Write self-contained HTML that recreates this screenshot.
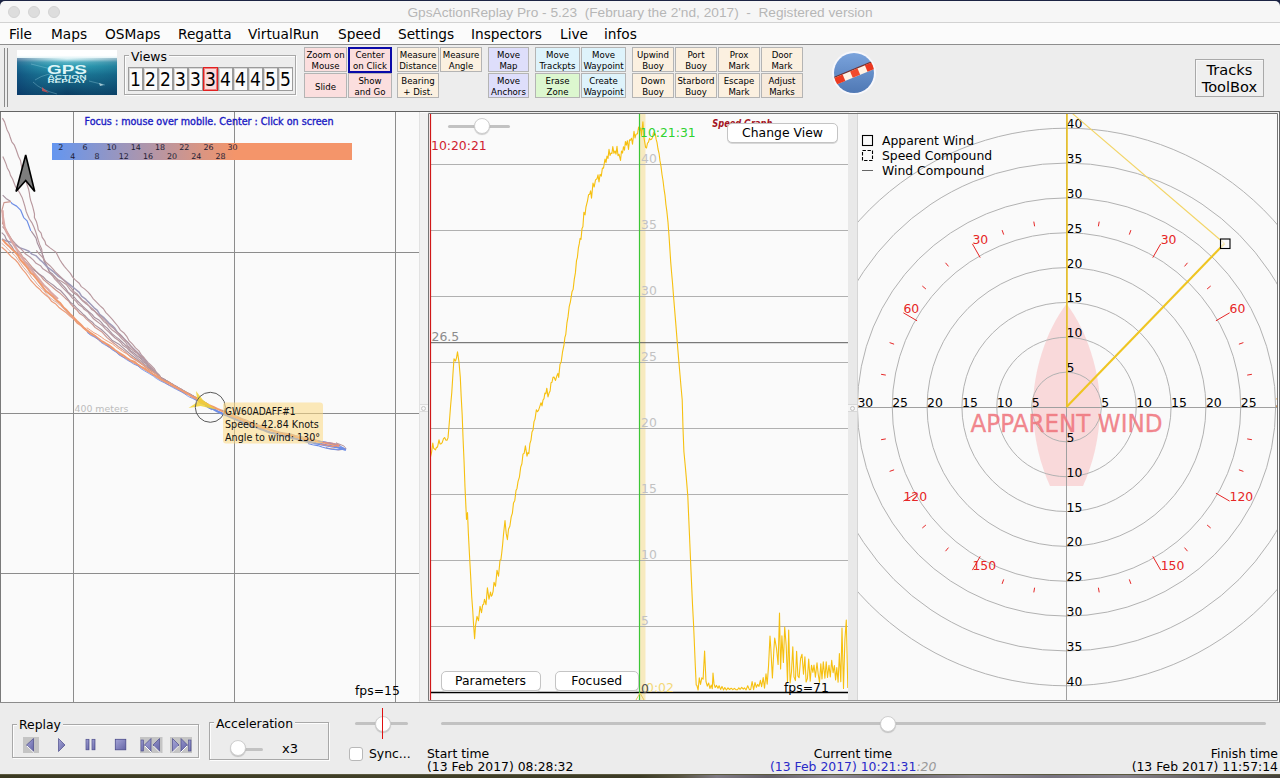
<!DOCTYPE html>
<html lang="en"><head><meta charset="utf-8"><title>GpsActionReplay Pro</title>
<style>
*{box-sizing:border-box}
html,body{margin:0;padding:0}
body{width:1280px;height:778px;overflow:hidden;background:#ececec;position:relative;font-family:"DejaVu Sans","Liberation Sans",sans-serif;color:#000}
.abs{position:absolute}
.t{position:absolute;white-space:nowrap;line-height:1}
#tbk{left:0;top:0;width:1280px;height:7px;background:#1c2444}
#title{left:0;top:1px;width:1280px;height:22px;background:#f6f6f6;border-bottom:1px solid #d2d2d2;border-radius:5px 5px 0 0}
#title .tx{position:absolute;left:0;width:1280px;text-align:center;top:3.5px;font:13.7px "Liberation Sans",sans-serif;color:#b6b6b6;white-space:pre}
.tl{position:absolute;top:5px;width:12px;height:12px;border-radius:6px;background:#dddddd;border:1px solid #d3d3d3}
#menu{left:0;top:23px;width:1280px;height:22px;background:#fbfbfb;border-bottom:1px solid #8e8e8e}
#menu span{position:absolute;top:3px;font-size:13.7px;line-height:16px;white-space:nowrap}
#tool{left:0;top:45px;width:1280px;height:66px;background:#ededed}
.tb{position:absolute;height:25px;border:1px solid #b4b4b4;font-size:8.6px;line-height:11px;text-align:center;padding-top:2px;white-space:nowrap;overflow:hidden}
.tb.one{padding-top:8px}
.gb{position:absolute;border:1px solid #a8a8a8;box-shadow:inset 1px 1px 0 #fdfdfd, 1px 1px 0 #fdfdfd}
.gbl{position:absolute;background:#ededed;padding:0 2px;font-size:12.4px;line-height:14px;white-space:nowrap}
.vb{position:absolute;top:67px;width:15px;height:24px;border:1px solid #9c9c9c;background:#fbfbfb;box-shadow:inset 1px 1px 0 #d8d8d8;font-family:'DejaVu Sans Condensed','DejaVu Sans','Liberation Sans',sans-serif;font-size:19px;line-height:22px;text-align:center;padding-right:0}
.panel{position:absolute;background:#fafafa;overflow:hidden}
.btn{position:absolute;background:#fff;border:1px solid #c4c4c4;border-radius:4px;font-size:12.4px;text-align:center;white-space:nowrap;box-shadow:0 1px 0 #d8d8d8}
.knob{position:absolute;width:16px;height:16px;margin:.5px;border-radius:8px;background:#fff;border:1px solid #cfcfcf;box-shadow:0 1px 1px rgba(0,0,0,.18)}
.trk{position:absolute;height:3px;background:#c2c2c2;border-radius:1.5px}
</style></head>
<body>
<div id="tbk" class="abs"></div><div id="title" class="abs"><div class="tl" style="left:8px"></div><div class="tl" style="left:28px"></div><div class="tl" style="left:48px"></div><div class="tx">GpsActionReplay Pro - 5.23  (February the 2'nd, 2017)  -  Registered version</div></div>
<div id="menu" class="abs"><span style="left:9px">File</span><span style="left:51px">Maps</span><span style="left:105px">OSMaps</span><span style="left:178px">Regatta</span><span style="left:248px">VirtualRun</span><span style="left:338px">Speed</span><span style="left:398px">Settings</span><span style="left:471px">Inspectors</span><span style="left:560px">Live</span><span style="left:604px">infos</span></div>
<div id="tool" class="abs"></div>
<div class="abs" style="left:4px;top:48px;width:1px;height:59px;background:#8a8a8a"></div><div class="abs" style="left:7px;top:48px;width:1px;height:59px;background:#8a8a8a"></div>
<svg class="abs" style="left:17px;top:50px" width="100" height="45" viewBox="0 0 100 45">
<defs><linearGradient id="lg1" x1="0" y1="0" x2="0" y2="1"><stop offset="0" stop-color="#ffffff"/><stop offset="0.12" stop-color="#ffffff"/><stop offset="0.2" stop-color="#d8f0f4"/><stop offset="0.27" stop-color="#5ab4c6"/><stop offset="0.36" stop-color="#2f9db4"/><stop offset="0.55" stop-color="#1a7292"/><stop offset="1" stop-color="#0b3c62"/></linearGradient>
<linearGradient id="lg2" x1="0" y1="0" x2="1" y2="0"><stop offset="0" stop-color="#0a3a70" stop-opacity=".55"/><stop offset="0.5" stop-color="#1c8aa0" stop-opacity="0"/><stop offset="1" stop-color="#0a4a70" stop-opacity=".35"/></linearGradient></defs>
<rect width="100" height="45" fill="url(#lg1)"/><rect y="8" width="100" height="37" fill="url(#lg2)"/>
<path d="M14 14 L34 19 M72 31 L88 35 M18 30 Q30 22 44 24 M16 32 Q24 40 40 44" stroke="#9fd8e4" stroke-width="1" fill="none" opacity=".35"/><path d="M82 33 l5 2 l-4 1z" fill="#d8f0f4" opacity=".7"/>
<path d="M25 37 l7 6 l-7 -2z" fill="#e05050" opacity=".75"/>
<text x="50" y="24.4" text-anchor="middle" font-family="'Liberation Sans',sans-serif" font-weight="bold" font-size="13.4" fill="#dff6f8" textLength="40" lengthAdjust="spacingAndGlyphs">GPS</text>
<text x="50" y="28.7" text-anchor="middle" font-family="'Liberation Sans',sans-serif" font-weight="bold" font-size="4.7" fill="#c6ecf0" textLength="39" lengthAdjust="spacingAndGlyphs">ACTION</text>
<text x="50" y="32.8" text-anchor="middle" font-family="'Liberation Sans',sans-serif" font-weight="bold" font-size="4.7" fill="#d4f2f4" textLength="39" lengthAdjust="spacingAndGlyphs">REPLAY</text>
</svg>
<div class="gb" style="left:124px;top:55px;width:172px;height:40px"></div><div class="gbl" style="left:129px;top:49.5px">Views</div>
<div class="vb" style="left:128px">1</div><div class="vb" style="left:143px">2</div><div class="vb" style="left:158px">2</div><div class="vb" style="left:173px">3</div><div class="vb" style="left:188px">3</div><div class="vb" style="left:203px;border-color:#e02020;background:#fbdcdc;box-shadow:inset 0 0 0 1px #f08080">3</div><div class="vb" style="left:218px">4</div><div class="vb" style="left:233px">4</div><div class="vb" style="left:248px">4</div><div class="vb" style="left:263px">5</div><div class="vb" style="left:278px">5</div>
<div class="tb" style="left:304px;top:47px;width:43px;background:#fbdede">Zoom on<br>Mouse</div><div class="tb" style="left:348px;top:47px;width:44px;background:#fbdede;border:2px solid #0a0aa8;padding-top:1px;height:26px">Center<br>on Click</div><div class="tb one" style="left:304px;top:73px;width:43px;background:#fbdede">Slide</div><div class="tb" style="left:348px;top:73px;width:44px;background:#fbdede">Show<br>and Go</div><div class="tb" style="left:397px;top:47px;width:42px;background:#fbf0e0">Measure<br>Distance</div><div class="tb" style="left:440px;top:47px;width:42px;background:#fbf0e0">Measure<br>Angle</div><div class="tb" style="left:397px;top:73px;width:42px;background:#fbf0e0">Bearing<br>+ Dist.</div><div class="tb" style="left:488px;top:47px;width:41px;background:#dedefb">Move<br>Map</div><div class="tb" style="left:488px;top:73px;width:41px;background:#dedefb">Move<br>Anchors</div><div class="tb" style="left:535px;top:47px;width:45px;background:#def3fb">Move<br>Trackpts</div><div class="tb" style="left:581px;top:47px;width:45px;background:#def3fb">Move<br>Waypoint</div><div class="tb" style="left:535px;top:73px;width:45px;background:#dcf7cf">Erase<br>Zone</div><div class="tb" style="left:581px;top:73px;width:45px;background:#def3fb">Create<br>Waypoint</div><div class="tb" style="left:632px;top:47px;width:42px;background:#fbf0e0">Upwind<br>Buoy</div><div class="tb" style="left:675px;top:47px;width:42px;background:#fbf0e0">Port<br>Buoy</div><div class="tb" style="left:718px;top:47px;width:42px;background:#fbf0e0">Prox<br>Mark</div><div class="tb" style="left:761px;top:47px;width:42px;background:#fbf0e0">Door<br>Mark</div><div class="tb" style="left:632px;top:73px;width:42px;background:#fbf0e0">Down<br>Buoy</div><div class="tb" style="left:675px;top:73px;width:42px;background:#fbf0e0">Starbord<br>Buoy</div><div class="tb" style="left:718px;top:73px;width:42px;background:#fbf0e0">Escape<br>Mark</div><div class="tb" style="left:761px;top:73px;width:42px;background:#f6eadc">Adjust<br>Marks</div>
<svg class="abs" style="left:830px;top:49px" width="48" height="48" viewBox="0 0 48 48">
<defs><linearGradient id="cg" x1="0" y1="0" x2="0" y2="1"><stop offset="0" stop-color="#7aa3dc"/><stop offset="1" stop-color="#4f78b4"/></linearGradient><clipPath id="cc"><circle cx="24" cy="24" r="20.2"/></clipPath></defs>
<circle cx="24" cy="24" r="22" fill="#f7f7fb"/><circle cx="24" cy="24" r="20" fill="url(#cg)"/>
<g clip-path="url(#cc)" transform="rotate(-22.5 24 24)"><rect x="2" y="20.5" width="46" height="7.5" fill="#fff2e4"/><rect x="2" y="19.8" width="46" height="1.3" fill="#6a1a14" opacity=".85"/>
<rect x="2" y="21" width="11" height="7" fill="#ec3a20"/><rect x="21" y="21" width="8" height="7" fill="#f24a2c"/><rect x="37" y="21" width="9" height="7" fill="#ea3820"/></g>
</svg>
<div class="abs" style="left:1195px;top:59px;width:69px;height:38px;border:1px solid #a9a9a9;background:#efefef;box-shadow:inset 1px 1px 0 #f8f8f8;font-size:14.6px;line-height:17.4px;text-align:center;padding-top:1px">Tracks<br>ToolBox</div>
<div class="abs" style="left:0;top:111px;width:1280px;height:1px;background:#646464"></div><div class="abs" style="left:0;top:112px;width:1280px;height:590px;background:#ededed"></div><div class="abs" style="left:0;top:112px;width:1279px;height:1px;background:#fdfdfd"></div><div class="abs" style="left:1279px;top:111px;width:1px;height:592px;background:#6e6e6e"></div><div class="abs" style="left:0;top:702px;width:1280px;height:1px;background:#8c8c8c"></div>
<svg class="abs" style="left:0;top:112px" width="420" height="590" viewBox="0 112 420 590"><defs><linearGradient id="spd" x1="0" y1="0" x2="1" y2="0"><stop offset="0" stop-color="#6496f0"/><stop offset="0.61" stop-color="#f4956a"/><stop offset="1" stop-color="#f4956a"/></linearGradient></defs><rect x="0" y="112" width="420" height="590" fill="#fafafa"/><line x1="73.5" y1="112" x2="73.5" y2="702" stroke="#8c8c8c" stroke-width="1"/><line x1="234.5" y1="112" x2="234.5" y2="702" stroke="#8c8c8c" stroke-width="1"/><line x1="395.5" y1="112" x2="395.5" y2="702" stroke="#8c8c8c" stroke-width="1"/><line x1="0" y1="252.5" x2="419" y2="252.5" stroke="#8c8c8c" stroke-width="1"/><line x1="0" y1="413.5" x2="419" y2="413.5" stroke="#8c8c8c" stroke-width="1"/><line x1="0" y1="573.5" x2="419" y2="573.5" stroke="#8c8c8c" stroke-width="1"/><rect x="52" y="143" width="300" height="17" fill="url(#spd)"/><text x="58.2" y="150.2" font-size="7.9" fill="#1c1c34">2</text><text x="70.3" y="159.3" font-size="7.9" fill="#1c1c34">4</text><text x="82.4" y="150.2" font-size="7.9" fill="#1c1c34">6</text><text x="94.5" y="159.3" font-size="7.9" fill="#1c1c34">8</text><text x="106.6" y="150.2" font-size="7.9" fill="#1c1c34">10</text><text x="118.7" y="159.3" font-size="7.9" fill="#1c1c34">12</text><text x="130.8" y="150.2" font-size="7.9" fill="#1c1c34">14</text><text x="142.9" y="159.3" font-size="7.9" fill="#1c1c34">16</text><text x="155.0" y="150.2" font-size="7.9" fill="#1c1c34">18</text><text x="167.1" y="159.3" font-size="7.9" fill="#1c1c34">20</text><text x="179.2" y="150.2" font-size="7.9" fill="#1c1c34">22</text><text x="191.3" y="159.3" font-size="7.9" fill="#1c1c34">24</text><text x="203.4" y="150.2" font-size="7.9" fill="#1c1c34">26</text><text x="215.5" y="159.3" font-size="7.9" fill="#1c1c34">28</text><text x="227.6" y="150.2" font-size="7.9" fill="#1c1c34">30</text><polyline fill="none" stroke="#b8989e" stroke-width="1.15" stroke-opacity="1" stroke-linejoin="round" points="2.4,118.1 4.6,121.9 5.8,125.9 7.0,129.7 9.2,134.0 10.2,137.3 11.8,141.8 14.2,144.8 16.2,149.8 17.4,153.3 18.5,156.5 20.5,160.5 21.2,164.6 22.1,168.8 23.7,173.2 24.9,176.9 25.9,180.9 26.9,184.3 28.6,189.3 29.4,193.1 29.8,196.7 30.7,200.6 32.3,205.2 33.4,209.3 34.5,214.0 34.4,217.4 36.5,221.8 37.6,225.9 38.3,229.9 41.1,233.2 42.1,237.1 45.0,241.3 45.8,244.5 50.4,248.1 55.9,252.1 57.9,255.9 59.8,259.7 62.0,263.1 64.3,266.3 67.0,269.5 70.4,273.4 72.6,277.1 75.5,280.1 79.2,283.3 81.3,286.6 84.5,288.9 88.1,292.2 90.6,295.0 93.3,298.8 96.5,302.2 99.6,305.4 103.4,308.8 105.9,312.6 108.4,315.1 112.3,319.3 114.5,322.1 118.1,326.5 120.4,330.1 124.3,333.3 126.7,336.3 129.2,340.9 132.5,344.2 135.5,347.9 138.9,350.9 141.4,355.0 144.3,358.0 147.9,362.3 150.9,365.1 154.3,368.6 156.2,372.2 159.7,375.4 160.3,377.4 164.9,379.6 168.7,383.0 173.5,385.2 177.2,387.6 180.5,389.1 184.3,392.3 189.1,394.5 192.2,396.2 196.7,398.5 200.2,400.9 203.7,402.5 208.0,404.5"/><polyline fill="none" stroke="#b8989e" stroke-width="1.15" stroke-opacity="1" stroke-linejoin="round" points="2.8,156.5 4.4,160.1 6.1,164.1 7.2,167.7 9.4,171.7 10.5,175.4 12.6,179.0 13.9,182.5 15.5,186.6 19.5,192.5 22.1,197.4 23.4,201.4 24.9,206.3 26.1,211.2 27.6,215.1 29.4,219.0 31.8,222.6 33.9,227.0 35.6,231.5 36.7,235.0 38.3,240.4 39.6,244.4 41.7,249.2 42.3,253.8 43.3,257.7 44.3,261.7 47.4,267.6 49.9,272.4 52.6,275.8 55.1,279.4 59.0,283.3 62.0,286.9 66.4,291.4 69.6,294.7 72.4,298.1 75.9,301.1 78.5,304.5 82.3,306.9 84.2,309.3 88.1,312.1 91.0,315.6 93.5,318.8 96.1,320.8 99.6,323.4 103.1,326.4 105.3,328.9 108.9,332.1 111.9,335.0 115.1,338.1 117.9,339.9 120.7,342.5 123.1,345.6 127.0,347.9 129.4,350.8 132.9,353.8 138.8,359.2 144.6,364.5 151.2,368.9 157.2,374.6 160.3,377.5 164.9,380.6 168.7,382.6 173.4,385.4 177.5,387.5 181.1,389.3 185.1,392.2 189.0,394.2 192.4,396.5 197.3,398.8 200.5,400.6 204.0,402.9 208.0,404.5"/><polyline fill="none" stroke="#a8929f" stroke-width="1.15" stroke-opacity="1" stroke-linejoin="round" points="2.7,195.2 6.0,198.4 10.8,201.6"/><polyline fill="none" stroke="#6e8ee6" stroke-width="1.2" stroke-opacity="1" stroke-linejoin="round" points="10.9,202.1 12.3,203.8 16.6,206.1 20.6,210.1 23.7,217.6 27.1,220.9 29.3,226.7 30.8,230.9"/><polyline fill="none" stroke="#a8929f" stroke-width="1.15" stroke-opacity="1" stroke-linejoin="round" points="31.2,231.1 33.7,234.7 36.0,238.1 37.4,243.3 39.7,248.2 41.7,252.6 43.5,257.2 44.5,261.7 47.5,266.9 49.0,271.4 52.6,274.0 54.8,276.6 57.4,280.0 60.1,282.4 65.6,288.4 67.9,291.9 71.1,294.6 74.2,297.1 77.0,300.5 80.5,303.9 82.7,306.2 85.6,308.9 89.4,312.3 92.0,314.4 94.6,317.6 98.5,319.7 101.3,322.3 103.6,325.3 107.2,328.1 109.8,331.2 112.5,334.1 115.5,336.6 118.7,338.9 122.0,342.0 124.9,344.7 128.0,347.2 130.6,350.6 134.2,353.2 137.4,356.0 140.4,358.3 143.3,361.8 146.5,364.0 148.8,367.5 151.7,370.3 155.5,371.9 160.4,377.9 164.5,379.6 169.2,382.5 173.3,384.6 176.9,387.7 180.4,389.3 185.1,392.3 189.4,393.5 192.8,396.4 196.7,398.4 200.1,399.8 203.8,401.8 208.0,404.5"/><polyline fill="none" stroke="#cc9890" stroke-width="1.15" stroke-opacity="1" stroke-linejoin="round" points="10.9,201.6 4.0,202.6 1.9,210.4 2.9,215.5 3.3,218.4 2.5,223.5 5.3,228.0 7.5,232.4 9.8,236.4 12.0,240.1 14.1,245.2 16.6,248.8 20.3,252.8 22.6,256.6 25.8,259.5 29.1,263.6 31.6,266.7 34.4,269.3 37.1,272.5 41.1,276.3 43.7,279.9 47.8,283.3 51.4,286.3 56.0,290.2 60.2,293.3 65.3,298.2 68.3,300.7 70.8,304.1 73.4,307.0 77.2,310.4 79.7,313.6 83.2,315.7 86.2,318.8 89.0,321.4 92.6,324.5 95.2,327.5 101.6,331.7 107.1,337.6 112.7,342.3 118.5,346.8 124.9,351.4 130.7,357.1 137.1,361.1 143.6,365.6 149.6,370.2 155.4,373.6 160.8,377.9 164.2,380.6 168.4,382.5 172.5,385.0 177.1,387.0 181.5,389.5 184.9,391.9 188.7,393.7 192.9,396.1 196.4,398.5 200.2,399.7 203.9,401.9 208.0,404.5"/><polyline fill="none" stroke="#a09cba" stroke-width="1.5" stroke-opacity="1" stroke-linejoin="round" points="1.9,238.9 6.5,241.1 11.3,242.2 16.0,245.3 19.5,247.6 24.6,249.4 28.9,251.2 31.9,254.1 35.8,255.6 39.7,259.6 42.8,262.3 46.4,266.3 49.8,268.9 54.0,272.1 57.8,275.8 61.6,278.4 65.9,281.7 70.2,284.9 74.6,288.5 79.3,292.4 81.5,296.1 85.3,298.8 87.8,301.4 91.2,304.7 94.1,307.8 97.3,310.3 99.7,314.3 103.5,317.3 105.4,319.3 108.7,322.8 112.1,325.5 115.0,328.6 117.5,332.5 121.1,335.6 123.8,338.6 126.7,341.6 130.3,345.4 132.5,347.8 136.4,351.5 139.3,354.2 141.9,357.4 145.4,360.7 148.2,364.7 150.8,367.3 154.3,370.8 156.9,373.3 160.2,378.1 164.3,379.6 168.9,382.5 173.1,384.8 177.3,387.0 180.6,389.8 184.4,391.5 189.1,394.2 192.5,395.6 196.5,398.5 200.3,399.8 204.5,402.5 208.0,404.5"/><polyline fill="none" stroke="#b8989e" stroke-width="1.15" stroke-opacity="1" stroke-linejoin="round" points="2.5,226.5 5.0,229.4 7.4,232.8 9.3,236.4 12.5,240.5 15.2,243.3 18.8,246.8 22.4,250.4 25.6,254.1 29.9,257.0 33.4,260.1 36.1,263.3 40.5,265.7 42.9,268.8 47.1,271.6 51.1,274.4 54.4,276.5 58.1,279.7 61.5,281.2 66.3,284.5 70.5,290.1 73.6,293.0 77.2,295.2 82.7,301.1 86.0,303.8 88.9,305.9 92.6,309.0 95.0,311.5 98.3,314.5 101.5,316.8 104.4,319.9 107.4,322.8 110.4,325.7 113.5,328.2 116.0,331.1 119.4,333.7 121.9,336.3 125.3,340.3 127.9,342.4 130.6,345.7 133.8,349.4 136.5,351.7 139.5,355.2 143.3,357.8 145.5,361.3 149.1,365.0 151.4,367.3 154.6,370.6 157.5,374.5 160.8,377.3 164.4,379.8 168.5,382.9 172.7,385.1 177.4,387.5 180.7,390.1 185.4,391.6 188.9,394.5 192.7,395.7 196.2,398.7 200.8,400.2 204.3,402.4 208.0,404.5"/><polyline fill="none" stroke="#a8929f" stroke-width="1.15" stroke-opacity="1" stroke-linejoin="round" points="1.7,232.6 4.6,235.3 6.2,239.2 9.0,243.2 11.9,246.5 13.6,249.6 17.0,252.9 20.8,256.4 23.8,260.2 26.5,262.8 29.6,266.3 32.6,269.2 36.8,272.0 39.1,274.1 43.1,276.7 46.0,280.0 50.0,282.9 53.4,285.3 56.8,288.2 60.5,290.5 65.4,295.9 68.1,299.3 70.6,302.5 73.8,304.9 76.5,307.9 80.0,311.1 82.8,313.9 85.5,316.3 89.0,319.8 92.4,322.2 94.4,324.6 101.3,329.5 107.1,334.9 112.4,340.6 119.4,344.6 125.1,349.6 130.9,354.8 136.8,359.3 142.9,364.4 148.7,368.7 155.3,373.3 161.2,377.7 165.0,379.9 169.2,382.1 172.5,384.5 177.2,387.7 180.6,389.5 185.3,391.9 188.3,393.6 192.3,395.6 196.6,397.7 201.0,400.2 204.2,402.6 208.0,404.5"/><polyline fill="none" stroke="#b8989e" stroke-width="1.15" stroke-opacity="1" stroke-linejoin="round" points="36.3,250.4 39.2,253.8 42.6,257.4 45.9,262.2 49.9,265.7 52.9,268.8 55.4,271.8 59.1,275.5 62.2,278.5 66.0,282.3 71.4,288.1 73.6,291.4 77.5,294.3 79.8,297.1 82.6,300.3 86.6,303.0 89.3,306.4 91.6,309.5 95.2,311.6 97.5,314.6 101.1,318.1 103.8,321.4 106.8,323.8 109.5,327.4 112.6,330.3 116.1,332.9 119.1,335.5 122.5,339.4 125.4,342.0 127.5,345.3 130.7,348.5 133.7,351.1 137.4,353.6 140.1,356.5 142.4,359.6 146.6,363.6 149.2,365.8 152.2,369.2 154.9,372.0 158.2,374.2 160.3,377.6 164.3,379.9 168.9,382.2 172.9,384.7 177.1,387.3 181.1,389.1 185.1,391.4 189.4,394.0 192.7,396.0 196.8,398.4 200.8,400.6 204.2,403.0 208.0,404.5"/><polyline fill="none" stroke="#dca8a4" stroke-width="2.2" stroke-opacity="1" stroke-linejoin="round" points="2.6,210.3 2.9,216.9 3.9,222.7 4.6,227.8 6.9,232.7 9.2,236.6 11.5,241.0 13.6,244.3 15.6,247.7 18.0,251.2 20.1,255.1 23.0,258.7 25.1,262.5 28.0,265.8 30.5,269.1 33.1,272.0 36.3,275.9 38.8,279.0 41.3,282.1 43.8,285.2 47.6,288.8 50.7,292.2 54.2,295.5 58.0,299.0"/><polyline fill="none" stroke="#f09a6e" stroke-width="2.0" stroke-opacity="1" stroke-linejoin="round" points="2.7,239.6 5.4,243.0 8.7,245.9 12.4,249.6 15.3,252.4 18.0,255.5 20.2,259.5 22.9,262.5 26.0,266.2 28.2,268.9 30.6,272.8 33.7,275.3 36.2,278.5 38.5,281.5 41.4,285.2 43.5,288.0 46.1,291.3 49.4,293.8 53.3,297.1 56.9,300.6 60.2,303.1 63.5,307.4 66.7,310.3 69.9,314.0 73.7,317.6 76.6,320.7 80.4,324.3 83.5,327.4 87.3,330.5 90.4,332.8 94.5,335.6 97.6,338.1 101.1,340.9 105.0,343.0 108.6,345.1 112.3,347.8 115.6,350.7 119.1,352.8 123.2,355.3 126.4,357.7 129.9,360.1 134.2,361.6 137.4,364.3 140.9,366.6 144.9,368.6 148.9,371.5 152.7,374.0 157.0,376.5 160.7,379.3 164.9,381.3 169.2,383.2 173.1,385.5 177.1,387.8 180.9,390.4 185.1,392.5 188.6,394.4 192.5,396.6 196.7,398.3 200.6,401.2 204.4,403.6 207.9,405.4 212.0,408.0"/><polyline fill="none" stroke="#ec9c78" stroke-width="1.2" stroke-opacity="1" stroke-linejoin="round" points="1.6,247.0 5.3,250.2 8.5,253.7 11.7,257.1 15.5,260.0 18.2,263.1 20.3,266.4 22.7,269.7 25.8,273.2 28.1,276.5 30.5,280.0 33.1,282.8 36.1,286.2 39.7,289.2 42.0,291.9 45.3,294.8 48.8,297.6 51.4,301.2 55.4,303.7 58.7,307.2 62.0,309.8 66.3,312.7 69.9,316.1 73.9,319.2 76.9,322.9 80.7,325.6 83.5,328.2 87.0,331.2 90.6,334.3 94.1,336.3 98.2,339.0 101.0,341.4 105.1,343.6 108.5,346.7 112.5,349.1 116.1,351.5 119.3,354.3 122.9,356.7 126.4,358.5 129.9,360.9 133.5,362.7 137.2,365.1 140.8,367.3 145.3,370.0 149.2,372.1 152.7,374.6 156.9,377.4 160.5,379.6 164.5,382.1 168.8,384.8 173.1,386.6 176.9,388.7 181.3,391.0 185.1,393.5 189.1,395.0 192.6,397.5 196.4,400.0 200.4,402.2 204.4,404.0 208.1,406.5 212.0,409.0"/><polyline fill="none" stroke="#d6a498" stroke-width="1.0" stroke-opacity="0.9" stroke-linejoin="round" points="1.6,243.2 5.4,246.4 8.5,249.9 12.1,253.0 15.6,256.3 18.3,260.2 20.7,263.4 23.5,267.4 26.4,270.7 29.5,274.2 31.8,277.9 34.6,280.7 37.3,284.3 40.6,287.5 43.7,290.2 46.3,293.8 48.8,296.7 52.9,300.0 56.8,302.5 60.4,305.5 63.9,308.9 66.8,312.1 70.2,315.3 73.5,318.5"/><polyline fill="none" stroke="#f0a078" stroke-width="1" stroke-opacity="1" stroke-linejoin="round" points="86.8,327.7 90.5,330.3 93.9,332.7 97.6,334.6 101.3,337.1 104.7,339.6 108.8,341.9 112.4,343.9 115.7,346.6 119.1,349.0 122.6,351.5 126.7,353.8 130.1,355.9 133.4,358.3 137.7,360.8 140.8,363.1 144.0,365.4 147.7,368.2 150.7,370.3 154.5,372.9 157.5,375.2 160.7,377.5"/><polyline fill="none" stroke="#6e8ee6" stroke-width="1.0" stroke-opacity="0.85" stroke-linejoin="round" points="86.9,332.2 90.4,335.1 94.6,337.2 98.2,339.4 101.0,342.4 104.8,344.8 109.1,347.0 111.9,349.6 116.0,352.1 118.9,354.9 122.9,357.1 126.6,359.7 130.2,361.8 133.9,364.2 137.9,365.9 140.8,368.6 144.8,371.0 149.1,373.5 153.3,376.1 156.4,378.5 160.7,381.0 164.6,382.9 169.1,385.4 172.7,387.4 176.8,389.6 181.0,391.7 184.4,393.7 188.4,396.5 192.4,398.4 197.0,400.6 200.2,403.3 204.7,404.8 207.9,407.6 212.0,409.9"/><polyline fill="none" stroke="#6e8ee6" stroke-width="2.4" stroke-opacity="1" stroke-linejoin="round" points="205.2,405.2 209.4,407.1 213.7,409.2 217.6,411.5 222.3,413.6 226.1,415.0 230.2,416.8 234.3,418.7 237.7,420.1 242.1,421.7 245.7,423.2 250.1,425.7 254.5,426.4 258.5,428.1 262.6,429.5 267.0,431.4 270.5,432.6 274.7,433.4 279.0,435.0 283.7,435.5 287.4,436.4 291.7,437.8 295.7,438.6 300.2,440.1 303.8,440.6 308.1,441.8 312.4,442.4 316.2,443.4 320.2,444.0 324.2,444.9 329.3,445.9 333.5,446.6 337.9,447.4 342.1,448.5 346.0,449.8"/><polyline fill="none" stroke="#f09a6e" stroke-width="2.0" stroke-opacity="1" stroke-linejoin="round" points="205.1,403.0 209.0,405.2 213.4,407.0 217.4,408.9 222.3,411.0 225.7,412.7 230.0,415.0 233.8,416.6 238.0,418.0 242.2,419.7 245.6,421.5 250.1,423.3 254.0,425.0 258.6,426.4 262.5,427.7 266.8,428.6 270.5,430.0 274.7,431.4 279.1,432.9 283.2,433.7 287.1,434.5 292.0,435.3 295.9,436.9 300.2,437.9 303.9,438.8 308.3,439.7 312.4,440.1 316.4,441.2 320.2,442.0 324.8,442.7 329.1,443.7 333.4,444.7 338.1,445.9 340.0,445.0"/><polyline fill="none" stroke="#b8989e" stroke-width="1" stroke-opacity="1" stroke-linejoin="round" points="221.9,410.1 225.9,411.5 230.3,413.3 233.7,415.0 238.2,416.6 242.2,418.6 246.1,420.0 249.7,421.7 254.0,423.4 257.9,424.8 262.4,426.1 266.7,428.0 270.6,429.4 274.9,430.7 278.9,431.9 283.3,432.9 287.3,433.4 291.8,434.2 295.7,435.6 300.4,436.4 303.7,437.3 308.4,438.0 312.1,439.1 316.1,439.9 320.1,441.3 324.8,442.0 329.0,442.8 333.2,443.9 338.2,444.5 336.1,442.9 339.9,444.3 344.1,446.1 346.0,448.6 342.1,449.5 338.1,450.1 334.3,448.9 330.0,448.7 326.0,447.5"/><polyline fill="none" stroke="#6e8ee6" stroke-width="1.1" stroke-opacity="1" stroke-linejoin="round" points="318.2,440.9 322.2,441.9 325.9,442.3 329.7,442.9 335.0,444.0 340.3,446.1 345.4,449.3 340.7,449.5 336.4,449.7 331.6,449.2 326.5,448.2 322.0,447.0 317.6,445.6 312.5,444.8 308.0,443.5"/><polyline fill="none" stroke="#e8907c" stroke-width="1" stroke-opacity="1" stroke-linejoin="round" points="321.7,442.5 327.7,442.7 332.8,443.2 339.2,445.2 332.0,446.7 328.2,445.6 323.9,444.9 320.0,444.5"/><path d="M25.7 155 L34.7 191.5 L25.7 180.5 L16 191.5 Z" fill="#7d7d7d" stroke="#000" stroke-width="1.6" stroke-linejoin="miter"/><path d="M196 391 L203 400 L216 409.5 L200.5 406 L188.5 408 L197.5 402 Z" fill="#f2d233" fill-opacity=".85"/><circle cx="210.3" cy="407.3" r="15" fill="none" stroke="#5a5a5a" stroke-width="1"/><rect x="223" y="402.5" width="100" height="41" rx="3" fill="#fbd984" fill-opacity=".56"/><text x="225" y="414.7" font-size="9.6" fill="#111" textLength="70.5" lengthAdjust="spacingAndGlyphs">GW60ADAFF#1</text><text x="225" y="427.7" font-size="9.6" fill="#111">Speed: 42.84 Knots</text><text x="225" y="440.7" font-size="9.6" fill="#111">Angle to wind: 130°</text><text x="74.5" y="411.7" font-size="9.4" fill="#bcbcbc">400 meters</text><text x="84.5" y="124.6" font-size="9.6" fill="#1c1cc4" stroke="#1c1cc4" stroke-width=".35" textLength="249" lengthAdjust="spacing">Focus : mouse over mobile. Center : Click on screen</text><text x="355" y="694.5" font-size="12.4" fill="#000">fps=15</text><line x1="0.5" y1="112" x2="0.5" y2="702" stroke="#7a7a7a"/><line x1="419.5" y1="112" x2="419.5" y2="702" stroke="#e2e2e2"/></svg>
<div class="abs" style="left:420px;top:113px;width:8px;height:589px;background:#f1f1f1"></div><div class="abs" style="left:420px;top:404px;width:8px;height:8px;background:#f7f7f7;border-top:1px solid #dcdcdc;border-bottom:1px solid #dcdcdc"></div><div class="abs" style="left:420.5px;top:405.5px;width:5px;height:5px;border-radius:3px;border:1.4px solid #c6c6c6"></div><svg class="abs" style="left:428px;top:112px" width="421" height="590" viewBox="428 112 421 590"><rect x="428" y="112" width="421" height="590" fill="#ededed"/><rect x="428" y="113" width="420" height="588" fill="#fafafa"/><path d="M428.5 701 L428.5 113.5 L848 113.5" fill="none" stroke="#767676"/><path d="M428 700.5 L848 700.5" fill="none" stroke="#9a9a9a"/><rect x="640" y="114" width="5.5" height="586" fill="#f7eabf"/><line x1="431" y1="626.5" x2="848" y2="626.5" stroke="#b0b0b0" stroke-width="1"/><text x="641" y="625.0" font-size="12.4" fill="#c2c2c2">5</text><line x1="431" y1="560.5" x2="848" y2="560.5" stroke="#b0b0b0" stroke-width="1"/><text x="641" y="559.0" font-size="12.4" fill="#c2c2c2">10</text><line x1="431" y1="494.5" x2="848" y2="494.5" stroke="#b0b0b0" stroke-width="1"/><text x="641" y="493.0" font-size="12.4" fill="#c2c2c2">15</text><line x1="431" y1="428.5" x2="848" y2="428.5" stroke="#b0b0b0" stroke-width="1"/><text x="641" y="427.0" font-size="12.4" fill="#c2c2c2">20</text><line x1="431" y1="362.5" x2="848" y2="362.5" stroke="#b0b0b0" stroke-width="1"/><text x="641" y="361.0" font-size="12.4" fill="#c2c2c2">25</text><line x1="431" y1="296.5" x2="848" y2="296.5" stroke="#b0b0b0" stroke-width="1"/><text x="641" y="295.0" font-size="12.4" fill="#c2c2c2">30</text><line x1="431" y1="230.5" x2="848" y2="230.5" stroke="#b0b0b0" stroke-width="1"/><text x="641" y="229.0" font-size="12.4" fill="#c2c2c2">35</text><line x1="431" y1="164.5" x2="848" y2="164.5" stroke="#b0b0b0" stroke-width="1"/><text x="641" y="163.0" font-size="12.4" fill="#c2c2c2">40</text><line x1="431" y1="342.7" x2="848" y2="342.7" stroke="#5c5c5c" stroke-width="1"/><text x="431.5" y="341.2" font-size="12.4" fill="#8c8c8c">26.5</text><line x1="431" y1="692.5" x2="848" y2="692.5" stroke="#000" stroke-width="1.4"/><polyline fill="none" stroke="#f6c010" stroke-width="1.1" stroke-linejoin="round" points="430.4,457.4 431.6,452.1 432.8,443.0 433.6,448.1 434.5,449.0 435.5,449.9 436.5,447.3 437.5,447.1 439.0,439.9 440.0,443.9 441.0,443.9 442.2,442.7 443.4,438.9 444.6,437.5 446.0,440.2 447.0,440.3 448.0,437.9 449.5,420.2 450.6,405.7 451.8,392.2 452.9,374.8 454.0,358.9 455.5,361.0 456.5,357.8 457.5,351.9 459.0,362.2 460.3,377.4 461.2,396.9 462.2,415.3 463.1,439.5 464.1,462.6 465.0,487.2 466.5,519.4 467.5,512.5 468.4,534.1 469.5,555.3 470.6,575.3 471.7,596.5 472.7,610.0 473.6,625.1 474.6,638.6 475.5,625.6 477.0,616.4 478.5,620.8 480.0,606.2 481.5,612.7 482.7,604.7 483.6,604.4 484.5,599.4 486.0,604.7 487.4,587.9 489.0,599.1 490.5,592.1 491.4,596.3 492.2,594.9 493.1,591.3 494.0,582.3 495.5,586.3 497.0,570.2 498.5,576.2 500.0,560.2 500.9,559.6 501.7,553.2 502.6,544.9 503.5,534.5 505.0,520.6 506.2,533.4 507.4,539.6 508.5,529.2 509.9,526.0 511.2,516.8 512.4,513.1 513.5,502.9 514.8,500.4 516.0,490.5 517.0,488.4 518.0,481.6 519.4,477.2 520.7,467.1 521.9,463.7 523.0,454.1 524.2,453.2 525.4,445.8 527.0,456.1 527.9,452.6 528.8,453.7 529.9,443.7 531.0,440.1 532.0,431.9 533.0,430.1 534.0,421.6 535.0,419.1 536.4,409.7 537.5,411.7 538.5,410.3 540.0,405.8 541.0,402.7 542.0,405.9 543.0,400.0 544.0,398.6 544.9,393.0 545.9,393.7 546.8,388.2 548.0,396.9 549.2,392.7 550.1,391.0 551.0,382.7 552.0,382.2 553.0,377.4 554.0,377.1 555.5,380.4 557.0,375.4 557.9,373.4 558.7,377.4 560.0,364.2 561.2,362.0 562.5,352.2 564.0,344.9 564.9,337.3 565.8,334.3 566.9,323.2 568.0,316.9 569.2,306.7 570.4,301.8 572.0,291.8 573.1,289.6 574.3,279.1 575.4,272.9 576.5,260.6 577.4,257.3 578.4,247.8 579.3,243.7 580.1,238.4 581.0,239.3 582.0,228.6 582.9,226.7 583.9,212.2 585.0,214.9 586.0,206.8 587.5,200.8 588.6,194.7 589.7,194.2 590.6,190.8 591.5,198.2 593.0,183.1 594.2,187.0 595.5,179.9 597.0,178.8 598.0,174.8 599.0,182.0 600.1,174.3 601.3,176.1 602.4,168.0 603.5,168.2 605.0,159.0 606.0,162.7 607.0,156.1 608.0,158.4 609.0,149.3 610.0,155.5 611.0,153.1 611.9,153.5 612.8,146.6 613.9,153.3 615.0,150.9 616.0,154.1 617.0,146.4 618.0,155.6 619.0,154.2 620.5,160.4 621.5,151.0 622.5,153.1 623.5,146.7 624.5,150.2 625.4,141.5 626.3,145.2 627.4,140.7 628.5,149.5 629.5,139.7 630.5,140.3 631.5,138.2 632.5,144.2 634.0,131.3 635.0,138.0 636.0,134.2 637.5,133.8 638.6,127.1 639.8,130.4 640.6,128.0 641.5,135.5 642.9,121.9 644.0,138.0 645.6,147.4 646.5,148.0 647.5,143.1 648.5,142.2 649.5,138.3 650.5,139.7 651.5,139.3 652.5,137.4 653.5,132.5 654.4,134.8 655.3,133.8 656.1,139.2 657.0,142.3 658.0,149.0 659.1,153.7 660.0,160.9 661.0,166.4 662.0,174.5 663.0,180.5 664.0,188.8 665.0,195.3 665.9,204.5 666.8,210.9 668.0,222.3 669.0,235.8 669.9,249.4 670.7,261.9 671.6,272.8 672.5,282.8 673.5,295.9 674.5,308.1 676.0,326.4 677.6,346.5 678.8,361.0 680.0,374.7 681.1,387.7 682.2,399.7 683.0,428.2 683.9,451.5 685.5,468.5 686.6,481.4 687.8,496.0 688.6,514.9 689.5,535.4 691.0,571.1 692.5,604.2 693.4,621.2 694.2,639.3 695.2,663.5 696.2,685.0 696.8,685.2 698.1,690.0 699.3,677.9 700.5,684.5 701.8,677.9 703.1,679.1 704.6,651.0 706.0,681.7 707.3,686.1 708.7,683.1 709.9,688.5 711.2,685.1 712.3,688.8 713.0,673.0 714.0,683.9 715.2,687.5 716.5,685.4 718.0,688.3 719.1,685.7 720.6,689.4 722.0,686.4 723.5,689.9 724.8,687.6 726.4,690.0 728.0,687.9 729.5,689.5 731.2,688.2 732.8,689.7 734.4,688.3 735.9,689.7 737.5,689.8 738.8,687.8 740.1,689.3 741.7,687.4 743.3,689.1 744.4,687.9 746.1,689.9 747.7,685.7 749.4,689.6 750.7,689.5 752.1,681.5 753.6,689.6 755.0,682.6 756.4,687.3 757.6,684.4 759.0,686.3 760.4,680.3 761.6,686.7 763.2,677.6 764.5,688.2 766.0,673.8 767.2,684.2 768.5,666.4 770.0,636.0 770.8,648.1 772.4,677.9 773.9,649.5 774.7,638.0 776.5,648.4 778.1,664.5 779.5,613.0 780.6,669.0 781.9,635.7 783.4,662.5 784.7,627.0 786.2,645.7 787.5,682.3 788.7,630.0 790.1,683.0 791.5,671.7 792.8,646.9 794.0,676.9 795.4,680.6 796.6,651.2 797.9,676.0 799.1,677.7 800.6,658.5 802.0,654.2 803.5,674.2 804.9,656.7 806.1,682.0 807.4,678.6 808.7,659.1 810.2,681.1 811.5,665.2 812.9,672.4 814.0,665.0 815.4,677.3 817.0,662.8 818.2,674.0 819.5,682.5 820.8,663.8 822.0,679.0 823.3,661.9 824.9,678.2 826.2,661.7 827.5,677.4 829.0,665.3 830.3,677.0 831.7,660.2 833.1,672.8 834.4,665.5 835.6,679.9 836.8,667.6 838.1,682.3 839.4,653.5 840.8,681.6 842.0,628.0 843.5,688.4 844.9,639.6 846.3,620.0 847.8,688.0"/><line x1="430.5" y1="114" x2="430.5" y2="700" stroke="#d01818" stroke-width="1.2"/><line x1="639.5" y1="114" x2="639.5" y2="700" stroke="#3cc636" stroke-width="1.2"/><text x="431" y="150" font-size="12.4" fill="#d01e30">10:20:21</text><text x="640" y="137" font-size="12.4" fill="#2fd22f">10:21:31</text><text x="712.3" y="127.3" font-size="10" font-weight="bold" font-style="italic" fill="#a31222" textLength="60" lengthAdjust="spacingAndGlyphs">Speed Graph</text><text x="646" y="692" font-size="12.4" fill="#f3d877">0:02</text><text x="641" y="692.5" font-size="12.4" fill="#555">0</text><path d="M636 700 L640 693 L644 700" fill="none" stroke="#e8c95a" stroke-width="1"/><text x="784" y="692" font-size="12.4" fill="#000">fps=71</text></svg>
<div class="trk" style="left:448px;top:125px;width:62px"></div><div class="knob" style="left:473px;top:117px"></div><div class="btn" style="left:727px;top:122.5px;width:111px;height:20px;line-height:18.5px;border-radius:5px">Change View</div><div class="btn" style="left:440.5px;top:670.5px;width:100px;height:20px;line-height:18.5px;border-radius:5px">Parameters</div><div class="btn" style="left:555px;top:670.5px;width:83.5px;height:20px;line-height:18.5px;border-radius:5px">Focused</div>
<div class="abs" style="left:848px;top:113px;width:9px;height:588px;background:#e9e9e9;border-top:1px solid #767676;border-bottom:1px solid #9a9a9a"></div><div class="abs" style="left:848px;top:404px;width:9px;height:8px;background:#f5f5f5;border-top:1px solid #d8d8d8;border-bottom:1px solid #d8d8d8"></div><div class="abs" style="left:849.5px;top:405.5px;width:5px;height:5px;border-radius:3px;border:1.4px solid #c2c2c2"></div><svg class="abs" style="left:857px;top:112px" width="423" height="590" viewBox="857 112 423 590"><defs><clipPath id="rp"><rect x="858" y="114" width="419" height="586"/></clipPath></defs><rect x="857" y="112" width="423" height="590" fill="#ededed"/><rect x="857" y="113" width="421" height="588" fill="#fafafa"/><path d="M857 113.5 L1277.5 113.5 L1277.5 701" fill="none" stroke="#767676"/><path d="M857.5 114 L857.5 700" stroke="#d6d6d6"/><path d="M857 700.5 L1278 700.5" stroke="#9a9a9a"/><path d="M1278.5 113 L1278.5 702" stroke="#fdfdfd"/><path d="M1279.5 112 L1279.5 702" stroke="#686868"/><g clip-path="url(#rp)"><path d="M1066.5 304 C 1046 330 1033 372 1033 407 C 1033 438 1041 466 1050 486 L 1083 486 C 1092 466 1100 438 1100 407 C 1100 372 1087 330 1066.5 304 Z" fill="#f8cfd0" fill-opacity=".76"/><circle cx="1066.5" cy="407.0" r="34.85" fill="none" stroke="#b2b2b2" stroke-width="1"/><circle cx="1066.5" cy="407.0" r="69.70" fill="none" stroke="#b2b2b2" stroke-width="1"/><circle cx="1066.5" cy="407.0" r="104.55" fill="none" stroke="#b2b2b2" stroke-width="1"/><circle cx="1066.5" cy="407.0" r="139.40" fill="none" stroke="#b2b2b2" stroke-width="1"/><circle cx="1066.5" cy="407.0" r="174.25" fill="none" stroke="#b2b2b2" stroke-width="1"/><circle cx="1066.5" cy="407.0" r="209.10" fill="none" stroke="#b2b2b2" stroke-width="1"/><circle cx="1066.5" cy="407.0" r="243.95" fill="none" stroke="#b2b2b2" stroke-width="1"/><circle cx="1066.5" cy="407.0" r="278.80" fill="none" stroke="#b2b2b2" stroke-width="1"/><line x1="858" y1="407.5" x2="1277" y2="407.5" stroke="#a0a0a0"/><line x1="1066.5" y1="114" x2="1066.5" y2="700" stroke="#a0a0a0"/><text x="970.5" y="432" font-size="24.5" fill="#f0747c" fill-opacity=".85" stroke="#f0747c" stroke-width=".45" stroke-opacity=".7" textLength="192" lengthAdjust="spacingAndGlyphs">APPARENT WIND</text><line x1="1098.4" y1="226.3" x2="1099.2" y2="221.6" stroke="#e62626" stroke-width="1"/><line x1="1034.6" y1="226.3" x2="1033.8" y2="221.6" stroke="#e62626" stroke-width="1"/><line x1="1129.3" y1="234.6" x2="1130.9" y2="230.1" stroke="#e62626" stroke-width="1"/><line x1="1003.7" y1="234.6" x2="1002.1" y2="230.1" stroke="#e62626" stroke-width="1"/><line x1="1152.8" y1="257.6" x2="1160.7" y2="243.9" stroke="#e62626" stroke-width="1"/><text x="1160.7" y="243.9" font-size="12.4" fill="#e62626">30</text><line x1="980.2" y1="257.6" x2="972.4" y2="243.9" stroke="#e62626" stroke-width="1"/><text x="972.4" y="243.9" font-size="12.4" fill="#e62626">30</text><line x1="1184.5" y1="266.4" x2="1187.5" y2="262.8" stroke="#e62626" stroke-width="1"/><line x1="948.5" y1="266.4" x2="945.5" y2="262.8" stroke="#e62626" stroke-width="1"/><line x1="1207.1" y1="289.0" x2="1210.7" y2="286.0" stroke="#e62626" stroke-width="1"/><line x1="925.9" y1="289.0" x2="922.3" y2="286.0" stroke="#e62626" stroke-width="1"/><line x1="1215.9" y1="320.8" x2="1229.6" y2="312.8" stroke="#e62626" stroke-width="1"/><text x="1229.6" y="312.8" font-size="12.4" fill="#e62626">60</text><line x1="917.1" y1="320.8" x2="903.4" y2="312.8" stroke="#e62626" stroke-width="1"/><text x="903.4" y="312.8" font-size="12.4" fill="#e62626">60</text><line x1="1238.9" y1="344.2" x2="1243.4" y2="342.6" stroke="#e62626" stroke-width="1"/><line x1="894.1" y1="344.2" x2="889.6" y2="342.6" stroke="#e62626" stroke-width="1"/><line x1="1247.2" y1="375.1" x2="1251.9" y2="374.3" stroke="#e62626" stroke-width="1"/><line x1="885.8" y1="375.1" x2="881.1" y2="374.3" stroke="#e62626" stroke-width="1"/><line x1="1247.2" y1="438.9" x2="1251.9" y2="439.7" stroke="#e62626" stroke-width="1"/><line x1="885.8" y1="438.9" x2="881.1" y2="439.7" stroke="#e62626" stroke-width="1"/><line x1="1238.9" y1="469.8" x2="1243.4" y2="471.4" stroke="#e62626" stroke-width="1"/><line x1="894.1" y1="469.8" x2="889.6" y2="471.4" stroke="#e62626" stroke-width="1"/><line x1="1215.9" y1="493.2" x2="1229.6" y2="501.1" stroke="#e62626" stroke-width="1"/><text x="1229.6" y="501.1" font-size="12.4" fill="#e62626">120</text><line x1="917.1" y1="493.2" x2="903.4" y2="501.1" stroke="#e62626" stroke-width="1"/><text x="903.4" y="501.1" font-size="12.4" fill="#e62626">120</text><line x1="1207.1" y1="525.0" x2="1210.7" y2="528.0" stroke="#e62626" stroke-width="1"/><line x1="925.9" y1="525.0" x2="922.3" y2="528.0" stroke="#e62626" stroke-width="1"/><line x1="1184.5" y1="547.6" x2="1187.5" y2="551.2" stroke="#e62626" stroke-width="1"/><line x1="948.5" y1="547.6" x2="945.5" y2="551.2" stroke="#e62626" stroke-width="1"/><line x1="1152.8" y1="556.4" x2="1160.7" y2="570.1" stroke="#e62626" stroke-width="1"/><text x="1160.7" y="570.1" font-size="12.4" fill="#e62626">150</text><line x1="980.2" y1="556.4" x2="972.4" y2="570.1" stroke="#e62626" stroke-width="1"/><text x="972.4" y="570.1" font-size="12.4" fill="#e62626">150</text><line x1="1129.3" y1="579.4" x2="1130.9" y2="583.9" stroke="#e62626" stroke-width="1"/><line x1="1003.7" y1="579.4" x2="1002.1" y2="583.9" stroke="#e62626" stroke-width="1"/><line x1="1098.4" y1="587.7" x2="1099.2" y2="592.4" stroke="#e62626" stroke-width="1"/><line x1="1034.6" y1="587.7" x2="1033.8" y2="592.4" stroke="#e62626" stroke-width="1"/><text x="1066.5" y="372.1" font-size="12.4">5</text><text x="1066.5" y="441.9" font-size="12.4">5</text><text x="1101.3" y="407.0" font-size="12.4">5</text><text x="1031.7" y="407.0" font-size="12.4">5</text><text x="1066.5" y="337.3" font-size="12.4">10</text><text x="1066.5" y="476.7" font-size="12.4">10</text><text x="1136.2" y="407.0" font-size="12.4">10</text><text x="996.8" y="407.0" font-size="12.4">10</text><text x="1066.5" y="302.4" font-size="12.4">15</text><text x="1066.5" y="511.6" font-size="12.4">15</text><text x="1171.0" y="407.0" font-size="12.4">15</text><text x="962.0" y="407.0" font-size="12.4">15</text><text x="1066.5" y="267.6" font-size="12.4">20</text><text x="1066.5" y="546.4" font-size="12.4">20</text><text x="1205.9" y="407.0" font-size="12.4">20</text><text x="927.1" y="407.0" font-size="12.4">20</text><text x="1066.5" y="232.8" font-size="12.4">25</text><text x="1066.5" y="581.2" font-size="12.4">25</text><text x="1240.8" y="407.0" font-size="12.4">25</text><text x="892.2" y="407.0" font-size="12.4">25</text><text x="1066.5" y="197.9" font-size="12.4">30</text><text x="1066.5" y="616.1" font-size="12.4">30</text><text x="1275.6" y="407.0" font-size="12.4">30</text><text x="857.4" y="407.0" font-size="12.4">30</text><text x="1066.5" y="163.1" font-size="12.4">35</text><text x="1066.5" y="651.0" font-size="12.4">35</text><text x="1310.5" y="407.0" font-size="12.4">35</text><text x="822.5" y="407.0" font-size="12.4">35</text><text x="1066.5" y="128.2" font-size="12.4">40</text><text x="1066.5" y="685.8" font-size="12.4">40</text><text x="1345.3" y="407.0" font-size="12.4">40</text><text x="787.7" y="407.0" font-size="12.4">40</text><line x1="1067.0" y1="407.0" x2="1067.0" y2="108.4" stroke="#efc522" stroke-width="1.6"/><line x1="1066.5" y1="108.4" x2="1224.5" y2="243.5" stroke="#f3d566" stroke-width="1.1"/><line x1="1066.5" y1="407.0" x2="1224.5" y2="243.5" stroke="#efc522" stroke-width="2.1"/><rect x="1220.5" y="239" width="9.5" height="9.5" fill="#fafafa" fill-opacity=".7" stroke="#000" stroke-width="1.1"/></g><rect x="862.5" y="135.5" width="10" height="10" fill="none" stroke="#000" stroke-width="1.1"/><rect x="862.5" y="150.5" width="10" height="10" fill="none" stroke="#000" stroke-width="1.1" stroke-dasharray="3.4 1.6"/><line x1="862" y1="170.5" x2="873" y2="170.5" stroke="#666" stroke-width="1"/><text x="882" y="145.0" font-size="12.4">Apparent Wind</text><text x="882" y="159.8" font-size="12.4">Speed Compound</text><text x="882" y="174.6" font-size="12.4">Wind Compound</text></svg>
<div class="abs" style="left:0;top:703px;width:1280px;height:71px;background:#ececec"></div><div class="abs" style="left:0;top:774px;width:1280px;height:4px;background:linear-gradient(90deg,#3a3922 0,#403f28 30%,#3c3b26 50%,#55523f 53%,#7e7a84 56%,#646068 60%,#8c8894 65%,#6e6a74 70%,#8a8690 76%,#777380 82%,#86828c 88%,#5c5a58 95%,#424038 100%);border-top:1px solid #5a583e"></div><div class="gb" style="left:12px;top:724px;width:187px;height:34px"></div><div class="gbl" style="left:17px;top:718.2px;background:#ececec">Replay</div><svg class="abs" style="left:20px;top:735px" width="176" height="20" viewBox="20 735 176 20"><defs><linearGradient id="pg" x1="0" y1="0" x2="1" y2="1"><stop offset="0" stop-color="#a6a6d8"/><stop offset="1" stop-color="#6464a6"/></linearGradient></defs><rect x="23" y="737" width="16" height="16" fill="#c4c4c4"/><path d="M26.5 745 L33.5 738.5 L33.5 751.5 Z" fill="url(#pg)" stroke="#4a4a8a" stroke-width=".7"/><path d="M27 746 L34 752.5" stroke="#fff" stroke-width="1"/><path d="M58.5 738.5 L65 745 L58.5 751.5 Z" fill="url(#pg)" stroke="#4a4a8a" stroke-width=".7"/><rect x="86" y="739.3" width="3" height="10.5" fill="url(#pg)" stroke="#4a4a8a" stroke-width=".7"/><rect x="92" y="739.3" width="3" height="10.5" fill="url(#pg)" stroke="#4a4a8a" stroke-width=".7"/><rect x="115.3" y="739.3" width="10.5" height="10.5" fill="url(#pg)" stroke="#4a4a8a" stroke-width=".8"/><rect x="140" y="737" width="22.5" height="16" fill="#c4c4c4"/><rect x="141" y="740" width="2.4" height="11" fill="url(#pg)" stroke="#4a4a8a" stroke-width=".6"/><path d="M144.5 745 L151 738.5 L151 751.5 Z M153 745 L159.5 738.5 L159.5 751.5 Z" fill="url(#pg)" stroke="#4a4a8a" stroke-width=".7"/><path d="M145 746 L151.5 752.5 M153.5 746 L160 752.5" stroke="#fff" stroke-width="1"/><rect x="170" y="737" width="22" height="16" fill="#c4c4c4"/><path d="M172.5 738.5 L179 745 L172.5 751.5 Z M181 738.5 L187.5 745 L181 751.5 Z" fill="url(#pg)" stroke="#4a4a8a" stroke-width=".7"/><path d="M172 752.5 L178.5 746 M180.5 752.5 L187 746" stroke="#fff" stroke-width="1"/><rect x="188.6" y="740" width="2.4" height="11" fill="url(#pg)" stroke="#4a4a8a" stroke-width=".6"/></svg><div class="gb" style="left:209px;top:722px;width:120px;height:38px"></div><div class="gbl" style="left:214px;top:717px;background:#ececec">Acceleration</div><div class="trk" style="left:237px;top:747.5px;width:26px"></div><div class="knob" style="left:229px;top:739px"></div><div class="t" style="left:282px;top:742px;font-size:13px">x3</div><div class="trk" style="left:355px;top:722px;width:53px"></div><div class="knob" style="left:374px;top:715px"></div><div class="abs" style="left:382px;top:708px;width:1px;height:31px;background:#e01010"></div><div class="abs" style="left:349px;top:747px;width:14px;height:14px;background:#fff;border:1px solid #b8b8b8;border-radius:3px"></div><div class="t" style="left:369px;top:748.1px;font-size:12.4px">Sync...</div><div class="trk" style="left:441px;top:722px;width:825px"></div><div class="knob" style="left:879px;top:715px"></div><div class="t" style="left:427px;top:747.5px;font-size:12.4px">Start time</div><div class="t" style="left:427px;top:760.5px;font-size:12.4px">(13 Feb 2017) 08:28:32</div><div class="t" style="left:753px;top:747.5px;width:200px;text-align:center;font-size:12.4px">Current time</div><div class="t" style="left:770px;top:760.5px;font-size:12.4px;color:#2a2ac8">(13 Feb 2017) 10:21:31<span style="color:#999;font-style:italic">:20</span></div><div class="t" style="right:2px;top:747.5px;font-size:12.4px">Finish time</div><div class="t" style="right:2px;top:760.5px;font-size:12.4px">(13 Feb 2017) 11:57:14</div>
</body></html>
